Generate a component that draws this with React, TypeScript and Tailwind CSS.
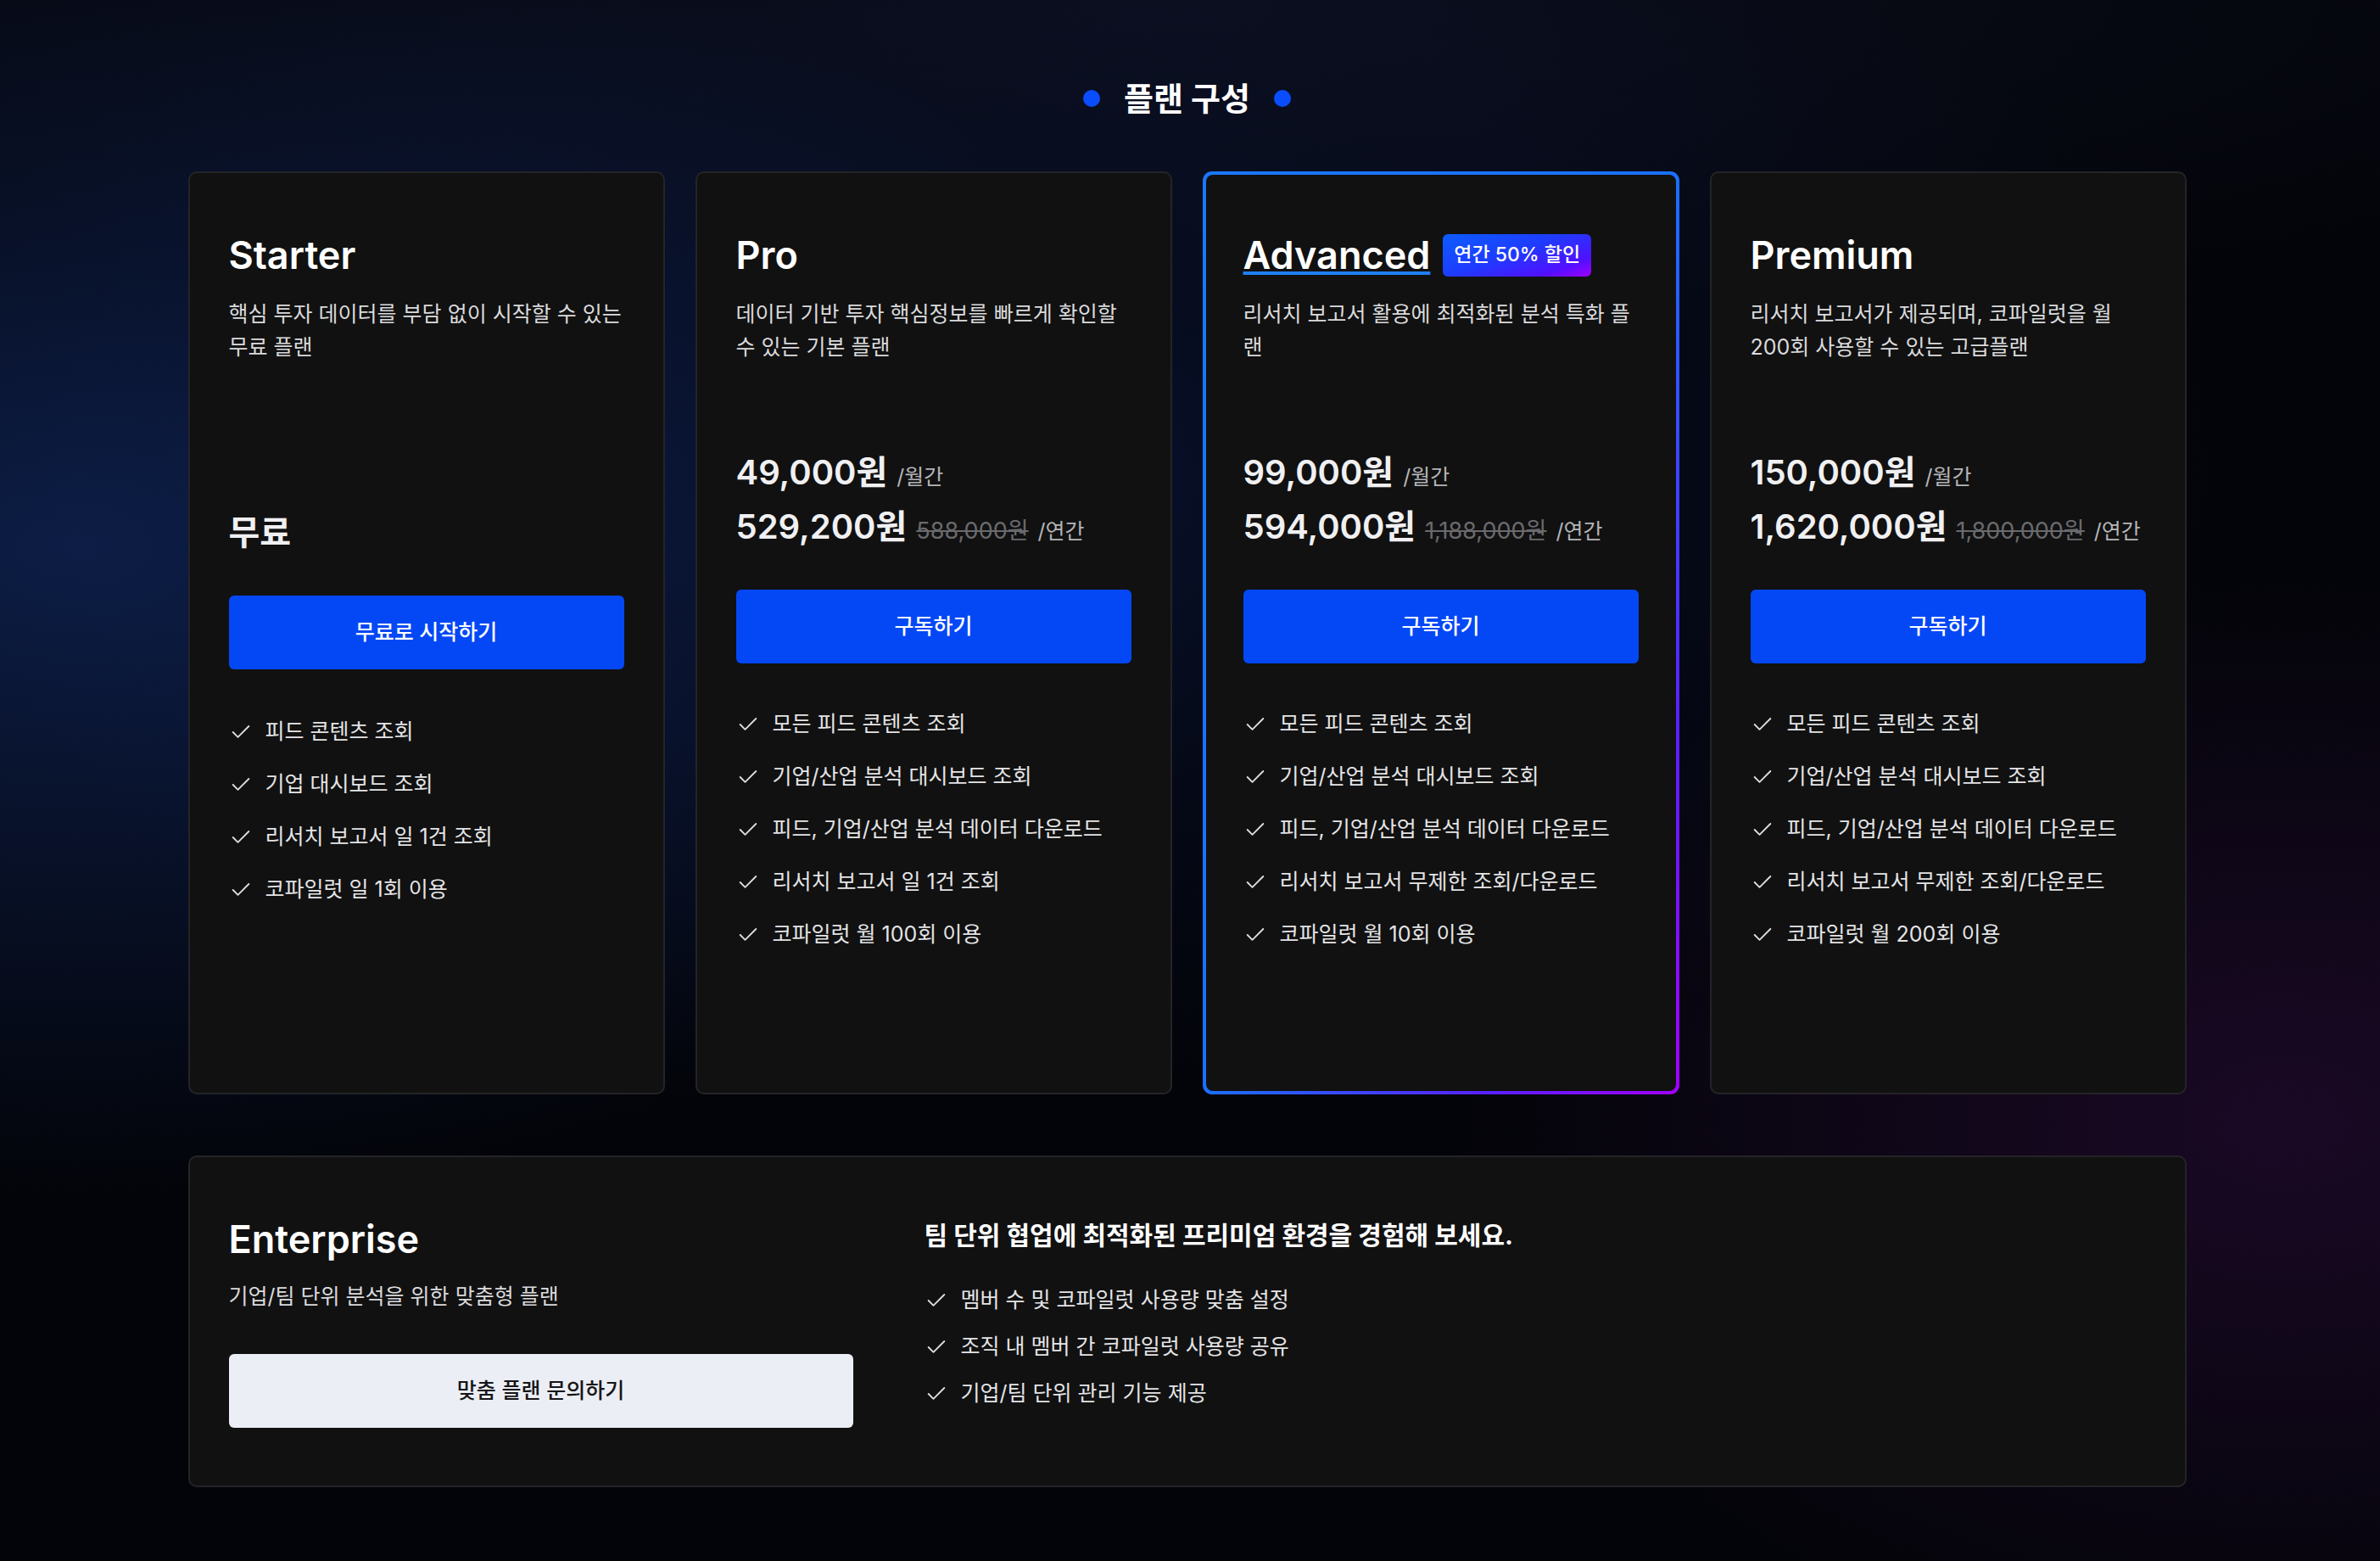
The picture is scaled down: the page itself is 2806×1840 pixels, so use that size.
import React from 'react';
import { Check } from 'lucide-react';

type Price = { amount: string; original?: string; unit: string };

type Plan = {
  name: string;
  badge?: string;
  highlight?: boolean;
  description: string;
  free?: boolean;
  prices: Price[];
  cta: string;
  features: string[];
};

const plans: Plan[] = [
  {
    name: 'Starter',
    description: '핵심 투자 데이터를 부담 없이 시작할 수 있는 무료 플랜',
    free: true,
    prices: [],
    cta: '무료로 시작하기',
    features: ['피드 콘텐츠 조회', '기업 대시보드 조회', '리서치 보고서 일 1건 조회', '코파일럿 일 1회 이용'],
  },
  {
    name: 'Pro',
    description: '데이터 기반 투자 핵심정보를 빠르게 확인할 수 있는 기본 플랜',
    prices: [
      { amount: '49,000원', unit: '/월간' },
      { amount: '529,200원', original: '588,000원', unit: '/연간' },
    ],
    cta: '구독하기',
    features: [
      '모든 피드 콘텐츠 조회',
      '기업/산업 분석 대시보드 조회',
      '피드, 기업/산업 분석 데이터 다운로드',
      '리서치 보고서 일 1건 조회',
      '코파일럿 월 100회 이용',
    ],
  },
  {
    name: 'Advanced',
    badge: '연간 50% 할인',
    highlight: true,
    description: '리서치 보고서 활용에 최적화된 분석 특화 플랜',
    prices: [
      { amount: '99,000원', unit: '/월간' },
      { amount: '594,000원', original: '1,188,000원', unit: '/연간' },
    ],
    cta: '구독하기',
    features: [
      '모든 피드 콘텐츠 조회',
      '기업/산업 분석 대시보드 조회',
      '피드, 기업/산업 분석 데이터 다운로드',
      '리서치 보고서 무제한 조회/다운로드',
      '코파일럿 월 10회 이용',
    ],
  },
  {
    name: 'Premium',
    description: '리서치 보고서가 제공되며, 코파일럿을 월 200회 사용할 수 있는 고급플랜',
    prices: [
      { amount: '150,000원', unit: '/월간' },
      { amount: '1,620,000원', original: '1,800,000원', unit: '/연간' },
    ],
    cta: '구독하기',
    features: [
      '모든 피드 콘텐츠 조회',
      '기업/산업 분석 대시보드 조회',
      '피드, 기업/산업 분석 데이터 다운로드',
      '리서치 보고서 무제한 조회/다운로드',
      '코파일럿 월 200회 이용',
    ],
  },
];

const enterpriseFeatures = ['멤버 수 및 코파일럿 사용량 맞춤 설정', '조직 내 멤버 간 코파일럿 사용량 공유', '기업/팀 단위 관리 기능 제공'];

function FeatureItem({ text }: { text: string }) {
  return (
    <li className="flex h-[38px] items-center gap-[15px] text-[25px] text-[#e4e4e6]">
      <Check size={28} strokeWidth={1.6} className="shrink-0 text-[#dedede]" />
      <span>{text}</span>
    </li>
  );
}

function PlanBody({ plan }: { plan: Plan }) {
  return (
    <>
      {/* name + optional badge */}
      <div className="flex h-[53px] items-center gap-[15px]">
        <h3
          className={
            plan.highlight
              ? 'text-[45px] font-semibold leading-none text-white underline decoration-[#1e7ff2] decoration-4 underline-offset-[3px]'
              : 'text-[45px] font-semibold leading-none text-white'
          }
        >
          {plan.name}
        </h3>
        {plan.badge && (
          <span className="flex h-[50px] items-center rounded-[6px] bg-[linear-gradient(160deg,#0c5cff_0%,#1e3cff_45%,#5010ff_80%,#a000ff_100%)] px-[13px] text-[23px] font-medium text-white">
            {plan.badge}
          </span>
        )}
      </div>

      <p className="mt-[24px] h-[78px] text-[25px] leading-[39px] text-[#dadadc]">{plan.description}</p>

      {/* price rows */}
      {plan.free ? (
        <div className="flex h-[227px] flex-col justify-end">
          <div className="text-[40px] font-semibold leading-[56px] text-[#f0f0f2]">무료</div>
        </div>
      ) : (
        <div className="flex h-[220px] flex-col justify-end gap-[8px]">
          {plan.prices.map((p) => (
            <div key={p.unit} className="flex h-[56px] items-center">
              <div className="flex items-baseline gap-[11px] leading-none">
                <span className="text-[40px] font-semibold text-[#f0f0f2]">{p.amount}</span>
                {p.original && <span className="text-[27px] text-[#6a6a6e] line-through">{p.original}</span>}
                <span className="text-[25px] text-[#b4b4b8]">{p.unit}</span>
              </div>
            </div>
          ))}
        </div>
      )}

      <button className="mt-[46px] h-[87px] w-full rounded-[6px] bg-[#0448f5] text-[25px] font-medium text-white">
        {plan.cta}
      </button>

      <ul className={plan.free ? 'mt-[55px] flex flex-col gap-[24px]' : 'mt-[53px] flex flex-col gap-[24px]'}>
        {plan.features.map((f) => (
          <FeatureItem key={f} text={f} />
        ))}
      </ul>
    </>
  );
}

function PlanCard({ plan }: { plan: Plan }) {
  if (plan.highlight) {
    return (
      <div className="flex min-h-[1088px] rounded-[11px] bg-[linear-gradient(to_bottom_right,#1a78ff_0%,#1a70ff_50%,#5a20ff_80%,#a300ff_100%)] p-[4px]">
        <div className="flex flex-1 flex-col rounded-[8px] bg-[#111111] px-[44px] pt-[68px]">
          <PlanBody plan={plan} />
        </div>
      </div>
    );
  }
  return (
    <div className="flex min-h-[1088px] flex-col rounded-[10px] border-2 border-[#242428] bg-[#111111] px-[46px] pt-[70px]">
      <PlanBody plan={plan} />
    </div>
  );
}

export default function App() {
  return (
    <div className="min-h-[1840px] w-full bg-[#030409] bg-[radial-gradient(ellipse_50%_42%_at_3%_35%,rgba(20,48,115,0.55),transparent),radial-gradient(ellipse_50%_40%_at_45%_30%,rgba(14,30,80,0.4),transparent),radial-gradient(ellipse_35%_35%_at_96%_72%,rgba(70,18,90,0.35),transparent),radial-gradient(ellipse_70%_22%_at_50%_0%,rgba(16,20,40,0.6),transparent)] pr-[7px] font-[Inter,'Noto_Sans_CJK_KR',sans-serif]">
      <div className="mx-auto w-[2356px] pb-[86px] pt-[92px]">
        <div className="flex items-center justify-center gap-[28px]">
          <span className="h-[20px] w-[20px] rounded-full bg-[#0a4dff]" />
          <h2 className="text-[38px] font-bold leading-[48px] text-white">플랜 구성</h2>
          <span className="h-[20px] w-[20px] rounded-full bg-[#0a4dff]" />
        </div>

        <div className="mt-[62px] grid grid-cols-4 gap-[36px]">
          {plans.map((plan) => (
            <PlanCard key={plan.name} plan={plan} />
          ))}
        </div>

        {/* Enterprise */}
        <div className="mt-[72px] flex rounded-[10px] border-2 border-[#242428] bg-[#111111] px-[46px] pb-[68px] pt-[70px]">
          <div className="w-[736px] shrink-0">
            <h3 className="flex h-[53px] items-center text-[45px] font-semibold text-white">Enterprise</h3>
            <p className="mt-[22px] text-[25px] leading-[39px] text-[#dadadc]">기업/팀 단위 분석을 위한 맞춤형 플랜</p>
            <button className="mt-[48px] h-[87px] w-full rounded-[6px] bg-[#eceef5] text-[25px] font-medium text-[#161618]">
              맞춤 플랜 문의하기
            </button>
          </div>
          <div className="ml-[84px] pt-[2px]">
            <h4 className="text-[30px] font-bold leading-[40px] text-white">팀 단위 협업에 최적화된 프리미엄 환경을 경험해 보세요.</h4>
            <ul className="mt-[38px] flex flex-col gap-[17px]">
              {enterpriseFeatures.map((f) => (
                <FeatureItem key={f} text={f} />
              ))}
            </ul>
          </div>
        </div>
      </div>
    </div>
  );
}
